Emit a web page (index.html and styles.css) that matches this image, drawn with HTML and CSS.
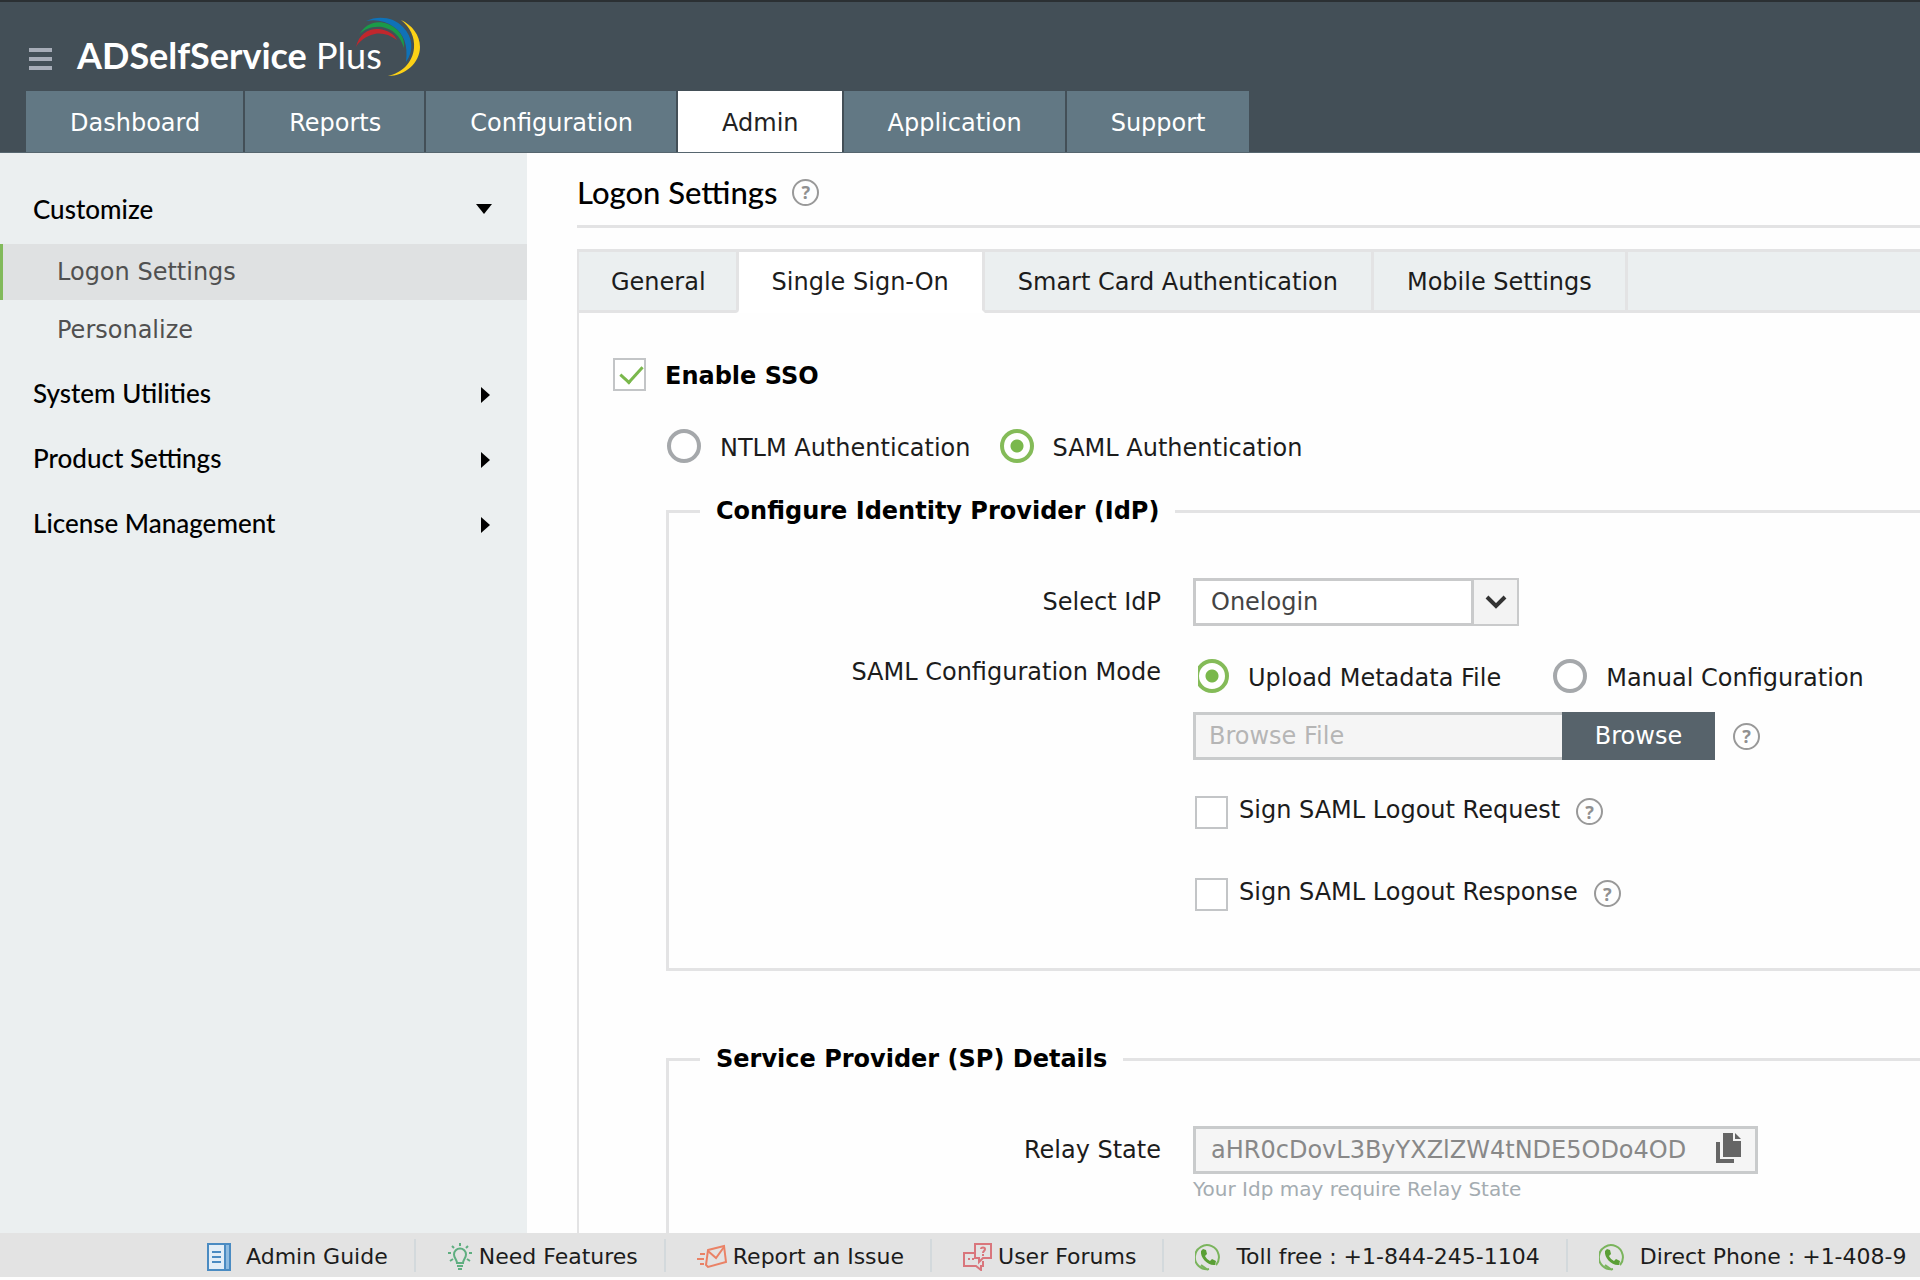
FILE: index.html
```html
<!DOCTYPE html>
<html lang="en">
<head>
<meta charset="utf-8">
<meta name="viewport" content="width=device-width, initial-scale=1.0">
<title>ADSelfService Plus - Logon Settings</title>
<link rel="stylesheet" href="styles.css">
</head>
<body>
<header class="header">
  <div class="brand">
    <button class="menu-btn" type="button" aria-label="Menu"><span></span><span></span><span></span></button>
    <div class="logo">
      <b>ADSelfService</b> Plus
      <svg class="logo-arc" viewBox="0 0 72 64" width="72" height="64" aria-hidden="true">
        <path fill="#c1272d" d="M6 32C9 18 20 13 29 14C38 15 45 20 47 25C38 18 28 17 21 20C13 23 8 28 6 32Z"/>
        <path fill="#1a9a48" d="M9 20C16 7 28 5 38 9C50 14 55 23 54 33C50 20 42 14 32 12C22 11 14 14 9 20Z"/>
        <path fill="#0f72b8" d="M16 6C28 0 44 2 53 12C63 22 64 36 56 47C58 30 54 19 44 12C36 6 26 4 16 6Z"/>
        <path fill="#fcd116" d="M51 5C62 10 70 20 70 32C70 48 55 61 38 61C52 58 63 47 64 33C65 22 60 12 51 5Z"/>
      </svg>
    </div>
  </div>
  <nav class="nav">
    <a href="#">Dashboard</a>
    <a href="#">Reports</a>
    <a href="#">Configuration</a>
    <a href="#" class="active">Admin</a>
    <a href="#">Application</a>
    <a href="#">Support</a>
  </nav>
</header>

<div class="main">
  <aside class="sidebar">
    <a href="#" class="group">Customize <i class="caret-down"></i></a>
    <a href="#" class="item active">Logon Settings</a>
    <a href="#" class="item">Personalize</a>
    <a href="#" class="group">System Utilities <i class="caret-right"></i></a>
    <a href="#" class="group">Product Settings <i class="caret-right"></i></a>
    <a href="#" class="group">License Management <i class="caret-right"></i></a>
  </aside>

  <main class="content">
    <div class="title">
      <h1>Logon Settings</h1>
      <button class="help" type="button">?</button>
    </div>

    <div class="tabs">
      <a href="#" class="before-active">General</a>
      <a href="#" class="active">Single Sign-On</a>
      <a href="#">Smart Card Authentication</a>
      <a href="#">Mobile Settings</a>
      <span class="tabs-rest"></span>
    </div>

    <div class="panel">
      <div class="sso-row">
        <input type="checkbox" id="enableSso" checked>
        <label for="enableSso">Enable SSO</label>
      </div>
      <div class="auth-row">
        <input type="radio" name="auth" id="authNtlm">
        <label for="authNtlm">NTLM Authentication</label>
        <input type="radio" name="auth" id="authSaml" checked>
        <label for="authSaml">SAML Authentication</label>
      </div>

      <fieldset class="idp">
        <legend>Configure Identity Provider (IdP)</legend>
        <div class="row">
          <label class="row-label" for="idp">Select IdP</label>
          <div class="select-box">
            <select id="idp"><option>Onelogin</option></select>
            <span class="select-arrow">
              <svg viewBox="0 0 22 14" width="22" height="14"><path d="M2 2L11 11L20 2" fill="none" stroke="#333" stroke-width="4"/></svg>
            </span>
          </div>
        </div>
        <div class="row mode-row">
          <span class="row-label">SAML Configuration Mode</span>
          <div class="modes">
            <input type="radio" name="mode" id="modeUpload" checked>
            <label for="modeUpload">Upload Metadata File</label>
            <input type="radio" name="mode" id="modeManual">
            <label for="modeManual">Manual Configuration</label>
          </div>
        </div>
        <div class="row file-row">
          <span class="row-label"></span>
          <input class="text file" type="text" placeholder="Browse File" aria-label="Metadata file" readonly>
          <button class="browse" type="button">Browse</button>
          <button class="help" type="button">?</button>
        </div>
        <div class="row sign-row">
          <span class="row-label"></span>
          <input type="checkbox" id="signRequest">
          <label for="signRequest">Sign SAML Logout Request</label>
          <button class="help" type="button">?</button>
        </div>
        <div class="row sign-row">
          <span class="row-label"></span>
          <input type="checkbox" id="signResponse">
          <label for="signResponse">Sign SAML Logout Response</label>
          <button class="help" type="button">?</button>
        </div>
      </fieldset>

      <fieldset class="sp">
        <legend>Service Provider (SP) Details</legend>
        <div class="row">
          <label class="row-label" for="relay">Relay State</label>
          <div class="relay">
            <input class="text" id="relay" type="text" value="aHR0cDovL3ByYXZlZW4tNDE5ODo4OD" readonly>
            <button class="copy" type="button" aria-label="Copy">
              <svg viewBox="0 0 26 32" width="26" height="32" fill="#666"><path d="M0 10H4V27H18V31H0Z"/><path d="M7 1H17V9H25V25H7Z"/><path d="M19 1L25 7H19Z"/></svg>
            </button>
          </div>
        </div>
        <div class="row">
          <span class="row-label"></span>
          <small class="hint">Your Idp may require Relay State</small>
        </div>
      </fieldset>
    </div>
  </main>
</div>

<footer class="footer">
  <a href="#">
    <svg class="wide" viewBox="0 0 24 28" width="24" height="28" fill="none" stroke="#4a8bc2" stroke-width="2"><path fill="#8ebbe0" d="M18 1H23V27H18Z"/><path fill="#e3eef7" d="M1 1H18V27H1Z"/><path d="M5 9H14M5 14H14M5 19H14"/></svg>
    Admin Guide
  </a>
  <a href="#">
    <svg viewBox="0 0 26 28" width="26" height="28" fill="none" stroke="#5fae80" stroke-width="2"><path d="M10 20C10 17 7 15 7 11.500A6 6 0 0 1 19 11.500C19 15 16 17 16 20Z"/><path d="M10 23H16M11 26H15M13 0V3M5 3L7 5M21 3L19 5M1 10H4M22 10H25M3 18L6 16M23 18L20 16"/></svg>
    Need Features
  </a>
  <a href="#">
    <svg viewBox="0 0 30 26" width="30" height="26" fill="none" stroke="#ea8266" stroke-width="2"><path d="M11 6L27 2L29 18L11 23L9 21Z"/><path d="M11 7L19 14L27 3M3 10H8M0 15H7M3 20H7"/></svg>
    Report an Issue
  </a>
  <a href="#">
    <svg viewBox="0 0 29 28" width="29" height="28" fill="none" stroke="#d9767c" stroke-width="2"><path d="M12 1H28V15H20L16 19V15H12Z"/><path d="M12 10H1V23H13L18 27V23H20V18"/><path d="M18 6C18 4 22 4 22 6C22 8 20 8 20 10M20 11V13M5 16H7M9 16H11"/></svg>
    User Forums
  </a>
  <a href="#">
    <svg class="wide" viewBox="0 0 26 28" width="26" height="28"><path d="M14 26A12 12 0 1 1 21 22M6 22L13 27" fill="none" stroke="#7ab45c" stroke-width="2"/><path fill="#5a9f35" d="M8 6L11 7L12 11L10 13C11 15 13 17 15 18L17 16L21 18L20 22C13 23 5 15 6 8Z"/></svg>
    Toll free : +1-844-245-1104
  </a>
  <a href="#">
    <svg class="wide" viewBox="0 0 26 28" width="26" height="28"><path d="M14 26A12 12 0 1 1 21 22M6 22L13 27" fill="none" stroke="#7ab45c" stroke-width="2"/><path fill="#5a9f35" d="M8 6L11 7L12 11L10 13C11 15 13 17 15 18L17 16L21 18L20 22C13 23 5 15 6 8Z"/></svg>
    Direct Phone : +1-408-9
  </a>
</footer>
</body>
</html>
```
FILE: styles.css
```css
* { box-sizing: border-box; }
body { margin: 0; height: 100vh; display: flex; flex-direction: column; overflow: hidden; background: #fefefe; color: #1c1c1c; font: 24px/30px "DejaVu Sans", Verdana, sans-serif; }
a { color: inherit; text-decoration: none; white-space: nowrap; }
label { white-space: nowrap; }
input, select, button { font: inherit; color: inherit; margin: 0; padding: 0; border-radius: 0; }
button { cursor: pointer; }

/* header */
.header { flex: none; background: #434f57; border-top: 2px solid #2b3033; border-bottom: 1px solid #56666f; padding-left: 26px; }
.brand { display: flex; align-items: center; height: 89px; padding-top: 25px; }
.menu-btn { display: flex; flex-direction: column; gap: 5px; width: 23px; margin: 0 25px 0 3px; background: none; border: none; }
.menu-btn span { height: 4px; width: 100%; background: #a7adb8; }
.logo { position: relative; padding-bottom: 8px; color: #fff; font: 36px/42px Lato, sans-serif; }
.logo-arc { position: absolute; left: 273px; top: -19px; }
.nav { display: flex; gap: 2px; }
.nav a { padding: 4px 43px 0 44px; line-height: 57px; background: #627884; color: #fff; }
.nav a.active { background: #fff; color: #222; }

/* sidebar */
.main { flex: 1; display: flex; min-height: 0; }
.sidebar { flex: 0 0 527px; background: #ebeff0; padding-top: 23px; }
.sidebar a { display: flex; align-items: center; }
.group { justify-content: space-between; height: 65px; padding: 0 35px 0 33px; color: #000; font-family: Lato, sans-serif; font-size: 26px; font-weight: 500; }
.item { height: 60px; padding-left: 54px; border-left: 3px solid transparent; color: #505050; }
.item.active { height: 56px; margin-top: 3px; background: #dfe1e2; border-left-color: #82ba5b; }
.caret-down { border: 8px solid transparent; border-top: 10px solid #000; border-bottom: none; }
.caret-right { margin: 4px 2px 0 0; border: 8px solid transparent; border-left: 9px solid #000; border-right: none; }

/* content */
.content { flex: 1; min-width: 0; padding-left: 50px; overflow: hidden; }
.title { display: flex; align-items: center; gap: 15px; height: 75px; padding-top: 6px; border-bottom: 3px solid #e3e3e4; }
.title h1 { margin: 0; color: #000; font: 500 31px/36px Lato, sans-serif; }
.help { flex: none; width: 27px; height: 27px; border: 2px solid #999; border-radius: 50%; background: none; color: #909090; font: bold 18px/22px "Noto Sans", sans-serif; }

.tabs { display: flex; height: 64px; margin-top: 21px; border-top: 3px solid #e3e3e4; border-left: 2px solid #e3e3e4; }
.tabs a, .tabs-rest { background: #ebeff0; border-bottom: 3px solid #e3e3e4; }
.tabs a { padding: 0 33px; line-height: 60px; border-right: 3px solid #e3e3e4; }
.tabs a.before-active { padding: 0 30px 0 32px; border-bottom-right-radius: 4px; }
.tabs a.active { background: #fff; border-bottom-color: #fff; }
.tabs-rest { flex: 1; }

.panel { height: 1000px; padding: 45px 0 0 34px; border-left: 2px solid #e3e3e4; }

input[type=checkbox], input[type=radio] { appearance: none; flex: none; background: #fff; }
input[type=checkbox] { width: 33px; height: 33px; border: 2px solid #c3c5c7; }
input[type=checkbox]:checked { position: relative; }
input[type=checkbox]:checked::after { content: ""; position: absolute; left: 10px; top: 1px; width: 10px; height: 19px; border: solid #7ab84c; border-width: 0 3px 3px 0; transform: rotate(42deg); }
input[type=radio] { width: 34px; height: 34px; border: 4px solid #a5a8ab; border-radius: 50%; }
input[type=radio]:checked { border-color: #84bb58; background: radial-gradient(circle, #7ab84c 6px, #fff 7px); }

.sso-row { display: flex; align-items: center; gap: 19px; color: #000; font-weight: bold; }
.auth-row { display: flex; align-items: center; gap: 19px; margin: 38px 0 33px 54px; }
.sso-row label, .auth-row label, .modes label { padding-top: 3px; }
.auth-row label { margin-right: 10px; }

fieldset { min-width: 0; margin: 0 0 73px 53px; padding: 52px 0 0; border: 3px solid #e3e3e4; border-right: none; }
legend { margin-left: 31px; padding: 0 16px; color: #000; font-weight: bold; }
.idp { padding-bottom: 57px; }
.sp { height: 300px; }

.row { display: flex; align-items: center; }
.row-label { flex: 0 0 492px; margin-right: 32px; text-align: right; }
.select-box { position: relative; width: 326px; }
.select-box select { appearance: none; display: block; width: 100%; height: 48px; padding-left: 15px; border: 3px solid #c9cacb; background: #fff; color: #444; }
.select-arrow { position: absolute; top: 0; right: 0; width: 48px; height: 48px; display: flex; align-items: center; justify-content: center; background: #f3f3f3; border: 2px solid #c9cacb; border-left-width: 3px; pointer-events: none; }
.mode-row { align-items: flex-start; margin-top: 33px; }
.mode-row .row-label { line-height: 26px; }
/* the first radio is cut by the left edge of its cell */
.modes { display: flex; align-items: center; gap: 19px; margin-left: 5px; overflow: hidden; }
.modes input:first-child { margin-left: -3px; }
.modes label + input { margin-left: 33px; }
.file-row { margin-top: 19px; }
.text { height: 48px; padding: 0 15px; border: 3px solid #c9cbcc; background: #f5f5f5; color: #888; outline: none; }
.file { width: 369px; padding: 0 13px; border-right: none; }
.file::placeholder { color: #b5b5b5; opacity: 1; }
.browse { width: 153px; height: 48px; border: none; background: #57636b; color: #fff; }
.browse + .help { margin-left: 18px; }
.sign-row { align-items: flex-start; margin-top: 36px; }
.sign-row + .sign-row { margin-top: 49px; }
.sign-row input { margin-left: 2px; }
.sign-row label { margin: 0 16px 0 11px; line-height: 28px; }
.sign-row .help { margin-top: 2px; }

.relay { position: relative; width: 565px; }
.relay .text { display: block; width: 100%; padding-right: 60px; }
.copy { position: absolute; right: 15px; top: 6px; width: 28px; height: 34px; border: none; background: none; }
.hint { padding-top: 2px; color: #a4acb1; font-size: 20px; line-height: 26px; }

/* footer */
.footer { flex: none; display: flex; align-items: center; height: 44px; margin-bottom: 3px; padding-left: 176px; overflow: hidden; background: #e3e3e3; font-size: 22px; }
.footer a { display: flex; align-items: center; gap: 6px; padding: 3px 26px 0 31px; }
.footer a + a { border-left: 2px solid #d3d9dc; }
.footer svg { flex: none; }
.footer .wide { margin-right: 9px; }
```
